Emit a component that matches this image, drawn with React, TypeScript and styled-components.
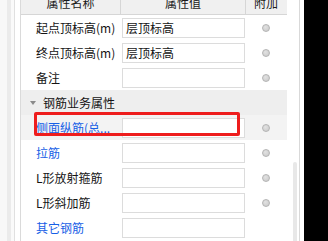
import React from 'react';
import styled, { createGlobalStyle } from 'styled-components';

const GlobalStyle = createGlobalStyle`
  html, body {
    margin: 0;
    padding: 0;
    background: #ffffff;
  }
  body {
    font-family: "Noto Sans CJK SC", "Microsoft YaHei", sans-serif;
    font-size: 12px;
    color: #141414;
  }
`;

const Screen = styled.div`
  display: flex;
  width: 328px;
  height: 241px;
  overflow: hidden;
  background: #ffffff;
`;

const Strip = styled.div<{ w: number; bg: string; line?: string }>`
  flex: 0 0 ${({ w }) => w}px;
  background: ${({ bg }) => bg};
  border-right: ${({ line }) => (line ? `1px solid ${line}` : 'none')};
`;

const Panel = styled.div`
  position: relative;
  flex: 0 0 266px;
  display: flex;
  flex-direction: column;
  border-left: 1px solid #dadada;
`;

// 表头被上方滚动裁掉一部分
const HeaderRow = styled.div`
  display: grid;
  grid-template-columns: 100px 125px 40px;
  height: 22px;
  margin-top: -8px;
  background: #f0f0f0;
  border-bottom: 1px solid #d6d6d6;
`;

const HeaderCell = styled.div<{ last?: boolean }>`
  display: flex;
  align-items: center;
  justify-content: center;
  border-right: ${({ last }) => (last ? 'none' : '1px solid #d6d6d6')};
  color: #1a1a1a;
  line-height: 1;
`;

const Row = styled.div<{ selected?: boolean }>`
  display: grid;
  grid-template-columns: 100px 125px 40px;
  height: 25px;
  background: ${({ selected }) => (selected ? '#f3f3f3' : '#ffffff')};
`;

const NameCell = styled.div<{ link?: boolean; blue?: boolean }>`
  display: flex;
  align-items: center;
  padding-left: 15px;
  white-space: nowrap;
  overflow: hidden;
  color: ${({ blue }) => (blue ? '#1760e6' : '#141414')};
  text-decoration: ${({ link }) => (link ? 'underline' : 'none')};
  text-underline-offset: 2px;
`;

const ValueCell = styled.div`
  display: flex;
  align-items: center;
  padding: 0 1px;
`;

const ValueBox = styled.div`
  flex: 1;
  height: 18px;
  border: 1px solid #dcdcdc;
  background: #ffffff;
  display: flex;
  align-items: center;
  padding-left: 3px;
  color: #141414;
`;

const ExtraCell = styled.div`
  display: flex;
  align-items: center;
  justify-content: center;
`;

const Radio = styled.span`
  width: 8px;
  height: 8px;
  border-radius: 50%;
  box-sizing: border-box;
  border: 1px solid #b4b4b4;
  background: radial-gradient(circle at 40% 35%, #e2e2e2, #c8c8c8);
`;

const GroupRow = styled.div`
  display: flex;
  align-items: center;
  height: 25px;
  background: #eeeeee;
  padding-left: 9px;
  gap: 7px;
  color: #141414;
`;

const Caret = styled.span`
  width: 0;
  height: 0;
  border-left: 3px solid transparent;
  border-right: 3px solid transparent;
  border-top: 4px solid #8a8a8a;
`;

// 红色标注框（截图上的标记）
const Highlight = styled.div`
  position: absolute;
  left: 13px;
  top: 112px;
  width: 206px;
  height: 24px;
  box-sizing: border-box;
  border: 3px solid #ee1d1d;
  border-radius: 2px;
  pointer-events: none;
`;

const Gutter = styled.div`
  flex: 0 0 13px;
  display: flex;
  justify-content: center;
  padding-top: 162px;
  border-right: 1px solid #d9d9d9;
  box-sizing: border-box;
`;

const Thumb = styled.div`
  width: 4px;
  margin-left: 3px;
  background: #e8e8e8;
  border-radius: 2px 2px 0 0;
`;

const Edge = styled.div`
  flex: 0 0 4px;
  background: #ffffff;
`;

const Outside = styled.div`
  flex: 1;
  background: #000000;
`;

type Item =
  | { kind: 'row'; name: string; value?: string; blue?: boolean; link?: boolean; selected?: boolean; radio?: boolean }
  | { kind: 'group'; name: string };

const items: Item[] = [
  { kind: 'row', name: '起点顶标高(m)', value: '层顶标高', radio: true },
  { kind: 'row', name: '终点顶标高(m)', value: '层顶标高', radio: true },
  { kind: 'row', name: '备注', radio: true },
  { kind: 'group', name: '钢筋业务属性' },
  { kind: 'row', name: '侧面纵筋(总...', blue: true, link: true, selected: true, radio: true },
  { kind: 'row', name: '拉筋', blue: true, radio: true },
  { kind: 'row', name: 'L形放射箍筋', radio: true },
  { kind: 'row', name: 'L形斜加筋', radio: true },
  { kind: 'row', name: '其它钢筋', blue: true },
];

const App: React.FC = () => {
  return (
    <>
      <GlobalStyle />
      <Screen>
        <Strip w={7} bg="#f8f8f8" />
        <Strip w={4} bg="#ebebeb" />
        <Strip w={3} bg="#fafafa" line="#e0e0e0" />
        <Strip w={5} bg="#ffffff" />
        <Panel>
          <HeaderRow>
            <HeaderCell>属性名称</HeaderCell>
            <HeaderCell>属性值</HeaderCell>
            <HeaderCell last>附加</HeaderCell>
          </HeaderRow>
          {items.map((item, i) =>
            item.kind === 'group' ? (
              <GroupRow key={i}>
                <Caret />
                {item.name}
              </GroupRow>
            ) : (
              <Row key={i} selected={item.selected}>
                <NameCell blue={item.blue} link={item.link}>
                  {item.name}
                </NameCell>
                <ValueCell>
                  <ValueBox>{item.value}</ValueBox>
                </ValueCell>
                <ExtraCell>{item.radio && <Radio />}</ExtraCell>
              </Row>
            )
          )}
          <Highlight />
        </Panel>
        <Gutter>
          <Thumb />
        </Gutter>
        <Edge />
        <Outside />
      </Screen>
    </>
  );
};

export default App;
